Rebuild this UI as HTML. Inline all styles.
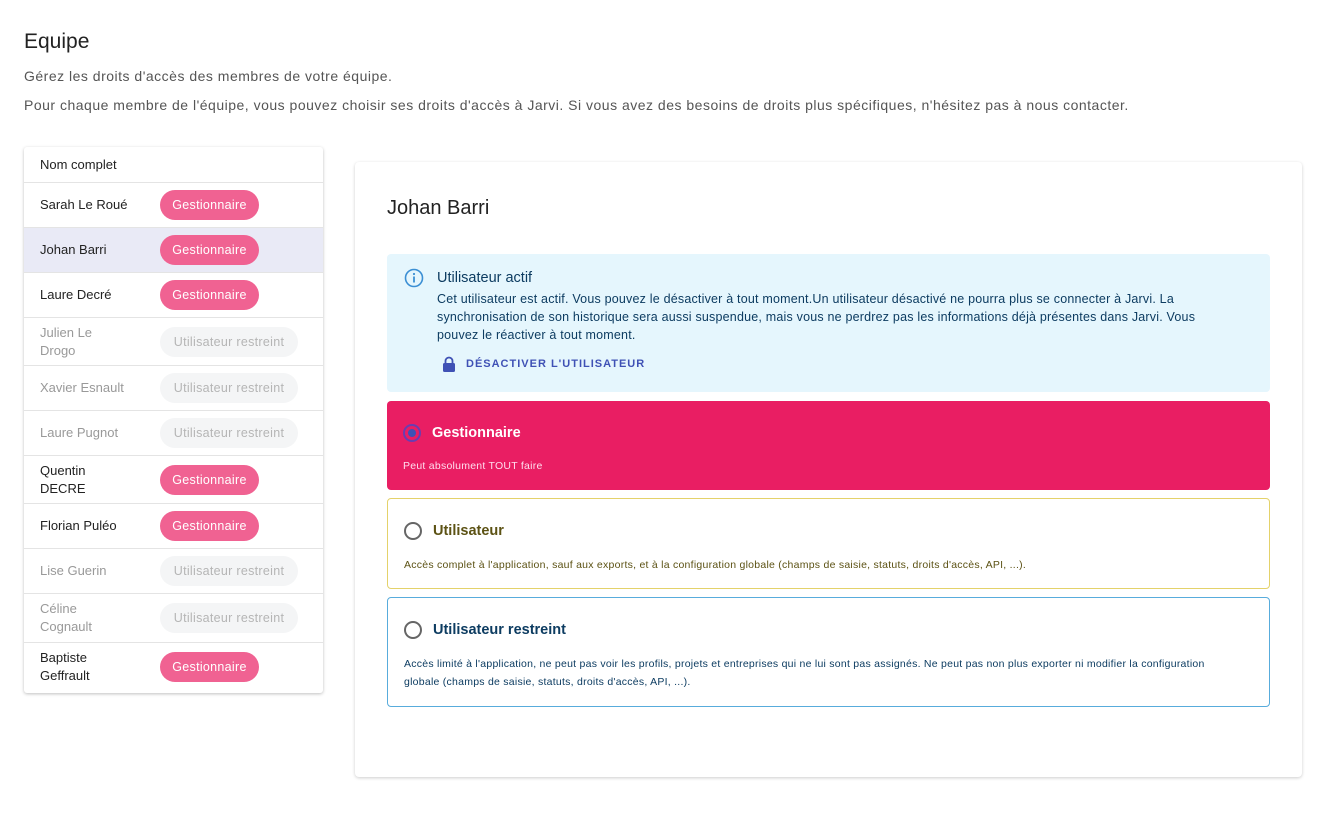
<!DOCTYPE html>
<html><head><meta charset="utf-8"><style>
*{box-sizing:border-box;margin:0;padding:0}
body{width:1336px;height:826px;background:#fff;font-family:"Liberation Sans",sans-serif;color:#222;position:relative;overflow:hidden}
.abs{position:absolute}
h1{position:absolute;left:24px;top:30px;font-size:21px;font-weight:400;color:#222}
.p{position:absolute;left:24px;font-size:14px;color:#555;letter-spacing:0.5px}
.tbl{position:absolute;left:24px;top:147px;width:299px;height:546px;box-shadow:0 1px 3px rgba(0,0,0,.25);background:#fff;border-radius:3px}
.row{position:absolute;left:0;width:299px;border-bottom:1px solid #e4e4e4;font-size:13px}
.row .n{position:absolute;left:16px;line-height:18px;width:105px}
.chip{position:absolute;left:136px;height:30px;border-radius:15px;font-size:12.5px;line-height:30px;text-align:center;letter-spacing:0.3px}
.g{width:99px;background:#f06292;color:#fff}
.r{width:138px;background:#f4f5f6;color:#b5b5b5}
.card{position:absolute;left:355px;top:162px;width:947px;height:615px;box-shadow:0 1px 3px rgba(0,0,0,.2);border-radius:4px;background:#fff}
.opt{position:absolute;left:387px;width:883px;border-radius:4px}
.opt .t{position:absolute;left:45px;font-size:14.5px;font-weight:700}
.opt .d{position:absolute;left:16px;font-size:10.5px;line-height:18px;width:830px;letter-spacing:0.25px}
.rad{position:absolute;left:16px;width:18px;height:18px;border-radius:50%;border:2px solid #666}
</style></head><body>
<h1>Equipe</h1>
<div class="p" style="top:68px">Gérez les droits d'accès des membres de votre équipe.</div>
<div class="p" style="top:97px">Pour chaque membre de l'équipe, vous pouvez choisir ses droits d'accès à Jarvi. Si vous avez des besoins de droits plus spécifiques, n'hésitez pas à nous contacter.</div>

<div class="tbl">
<div class="row" style="top:0;height:36px"><span class="n" style="top:9px;font-weight:500;color:#222">Nom complet</span></div>
<div class="row" style="top:36px;height:45px"><span class="n" style="top:13px">Sarah Le Roué</span><span class="chip g" style="top:7px">Gestionnaire</span></div>
<div class="row" style="top:81px;height:45px;background:#e9eaf6"><span class="n" style="top:13px">Johan Barri</span><span class="chip g" style="top:7px">Gestionnaire</span></div>
<div class="row" style="top:126px;height:45px"><span class="n" style="top:13px">Laure Decré</span><span class="chip g" style="top:7px">Gestionnaire</span></div>
<div class="row" style="top:171px;height:48px;color:#999"><span class="n" style="top:6px;width:70px">Julien Le Drogo</span><span class="chip r" style="top:9px">Utilisateur restreint</span></div>
<div class="row" style="top:219px;height:45px;color:#999"><span class="n" style="top:13px">Xavier Esnault</span><span class="chip r" style="top:7px">Utilisateur restreint</span></div>
<div class="row" style="top:264px;height:45px;color:#999"><span class="n" style="top:13px">Laure Pugnot</span><span class="chip r" style="top:7px">Utilisateur restreint</span></div>
<div class="row" style="top:309px;height:48px"><span class="n" style="top:6px;width:70px">Quentin DECRE</span><span class="chip g" style="top:9px">Gestionnaire</span></div>
<div class="row" style="top:357px;height:45px"><span class="n" style="top:13px">Florian Puléo</span><span class="chip g" style="top:7px">Gestionnaire</span></div>
<div class="row" style="top:402px;height:45px;color:#999"><span class="n" style="top:13px">Lise Guerin</span><span class="chip r" style="top:7px">Utilisateur restreint</span></div>
<div class="row" style="top:447px;height:49px;color:#999"><span class="n" style="top:6px;width:70px">Céline Cognault</span><span class="chip r" style="top:9px">Utilisateur restreint</span></div>
<div class="row" style="top:496px;height:50px;border:none"><span class="n" style="top:6px;width:70px">Baptiste Geffrault</span><span class="chip g" style="top:9px">Gestionnaire</span></div>
</div>

<div class="card"></div>
<div class="abs" style="left:387px;top:197px;font-size:20px;color:#222">Johan Barri</div>

<div class="opt" style="top:254px;height:138px;background:#e5f6fd">
<svg class="abs" style="left:17px;top:14px" width="20" height="20" viewBox="0 0 20 20"><circle cx="10" cy="10" r="8.5" fill="none" stroke="#3b8fd4" stroke-width="1.6"/><rect x="9.1" y="8.5" width="1.8" height="6" fill="#3b8fd4"/><circle cx="10" cy="6" r="1.1" fill="#3b8fd4"/></svg>
<div class="abs" style="left:50px;top:16px;font-size:14.5px;color:#0d3c61;font-weight:500">Utilisateur actif</div>
<div class="abs" style="left:50px;top:36px;width:780px;font-size:12.5px;line-height:18px;color:#0d3c61;letter-spacing:0.2px">Cet utilisateur est actif. Vous pouvez le désactiver à tout moment.Un utilisateur désactivé ne pourra plus se connecter à Jarvi. La synchronisation de son historique sera aussi suspendue, mais vous ne perdrez pas les informations déjà présentes dans Jarvi. Vous pouvez le réactiver à tout moment.</div>
<svg class="abs" style="left:55px;top:102px" width="14" height="17" viewBox="0 0 14 17"><path d="M3.5 7V5a3.5 3.5 0 0 1 7 0v2" fill="none" stroke="#3f51b5" stroke-width="1.8"/><rect x="1" y="7" width="12" height="9" rx="1.5" fill="#3f51b5"/></svg>
<div class="abs" style="left:79px;top:104px;font-size:11px;font-weight:700;letter-spacing:1px;color:#3f51b5">DÉSACTIVER L'UTILISATEUR</div>
</div>

<div class="opt" style="top:401px;height:89px;background:#e91e63">
<div class="rad" style="top:23px;border-color:#6a3db0"><div style="position:absolute;left:3px;top:3px;width:8px;height:8px;border-radius:50%;background:#3f51b5"></div></div>
<div class="t" style="top:24px;color:#fff">Gestionnaire</div>
<div class="d" style="top:56px;color:#fde">Peut absolument TOUT faire</div>
</div>

<div class="opt" style="top:498px;height:91px;border:1px solid #e4d26a">
<div class="rad" style="top:23px"></div>
<div class="t" style="top:24px;color:#5c5214">Utilisateur</div>
<div class="d" style="top:57px;color:#5c5214">Accès complet à l'application, sauf aux exports, et à la configuration globale (champs de saisie, statuts, droits d'accès, API, ...).</div>
</div>

<div class="opt" style="top:597px;height:110px;border:1px solid #58acdc">
<div class="rad" style="top:23px"></div>
<div class="t" style="top:24px;color:#0d3c61">Utilisateur restreint</div>
<div class="d" style="top:57px;color:#0d3c61">Accès limité à l'application, ne peut pas voir les profils, projets et entreprises qui ne lui sont pas assignés. Ne peut pas non plus exporter ni modifier la configuration globale (champs de saisie, statuts, droits d'accès, API, ...).</div>
</div>
</body></html>
